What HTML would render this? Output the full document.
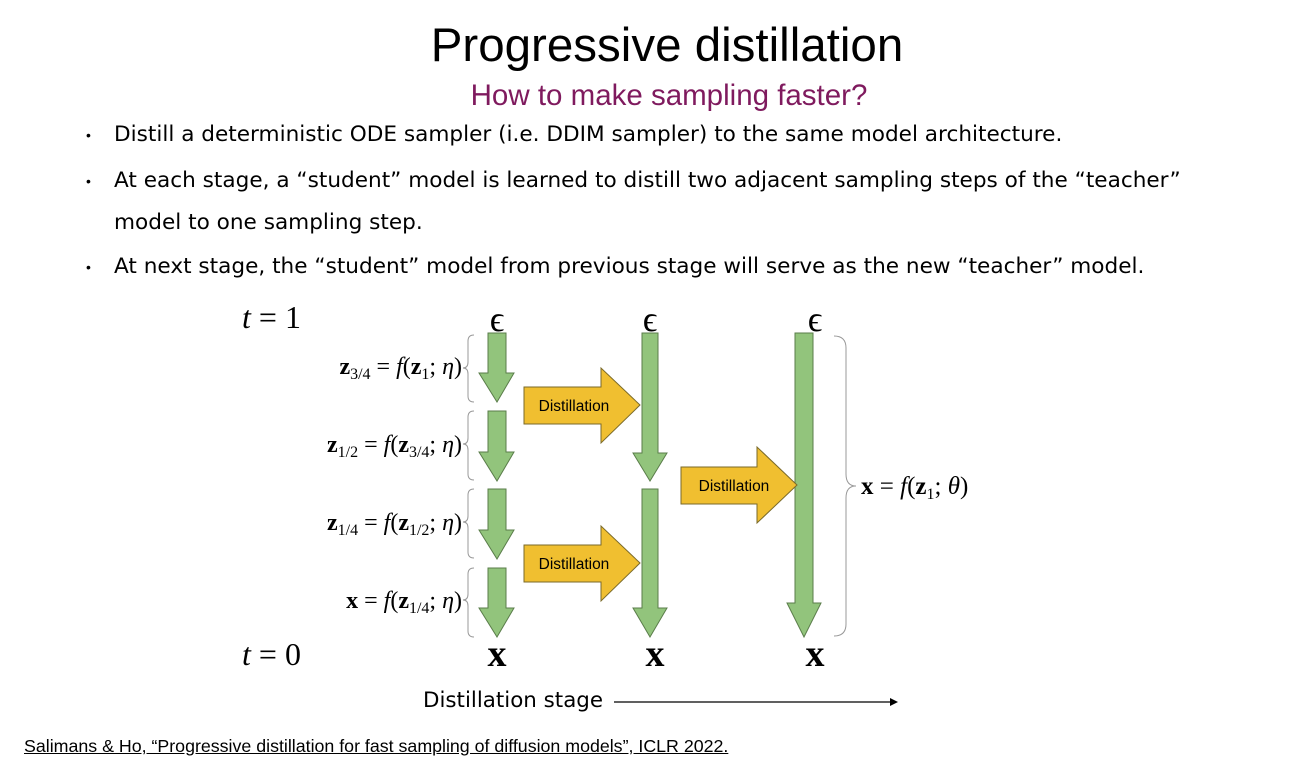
<!DOCTYPE html>
<html><head><meta charset="utf-8"><style>
body{margin:0;width:1307px;height:762px;background:#fff;position:relative;overflow:hidden;font-family:"Liberation Sans",sans-serif;color:#000}
.a{position:absolute;white-space:nowrap}
.t{left:0;width:1334px;text-align:center;top:18px;font-size:47.5px}
.s{left:0;width:1338px;text-align:center;top:79px;font-size:29.5px;color:#7f1a5e}
.b{left:114px;font-size:21.6px;font-family:"DejaVu Sans",sans-serif}
.d{left:86px;font-size:14px}
</style></head><body>
<div class="a t">Progressive distillation</div>
<div class="a s">How to make sampling faster?</div>
<div class="a d" style="top:127px">•</div>
<div class="a b" style="top:122px">Distill a deterministic ODE sampler (i.e. DDIM sampler) to the same model architecture.</div>
<div class="a d" style="top:173px">•</div>
<div class="a b" style="top:168px">At each stage, a “student” model is learned to distill two adjacent sampling steps of the “teacher”</div>
<div class="a b" style="top:210px">model to one sampling step.</div>
<div class="a d" style="top:259px">•</div>
<div class="a b" style="top:254px">At next stage, the “student” model from previous stage will serve as the new “teacher” model.</div>
<svg class="a" style="left:0;top:0" width="1307" height="762">
<g fill="#92c47c" stroke="#5a7d4a" stroke-width="1">
<path d="M488 333H506V373H514L497 402L479 373H488Z"/>
<path d="M488 411H506V452H514L497 481L479 452H488Z"/>
<path d="M488 489H506V530H514L497 559L479 530H488Z"/>
<path d="M488 568H506V608H514L497 637L479 608H488Z"/>
<path d="M642 333H658V453H667L650 481L633 453H642Z"/>
<path d="M642 489H658V608H667L650 637L633 608H642Z"/>
<path d="M795 333H813V603H821L804 637L787 603H795Z"/>
</g>
<g fill="#f0bf30" stroke="#7a6a2a" stroke-width="1">
<path d="M524 387H601V368L640 405L601 443V424H524Z"/>
<path d="M524 545H601V526L640 563L601 601V582H524Z"/>
<path d="M681 467H757V447L797 485L757 523V504H681Z"/>
</g>
<g font-size="15.5" text-anchor="middle" font-family="Liberation Sans">
<text x="574" y="411">Distillation</text>
<text x="574" y="569">Distillation</text>
<text x="734" y="491">Distillation</text>
</g>
<g fill="none" stroke="#999" stroke-width="1">
<path d="M474 335Q468 335 468 341V362Q468 368 463 368Q468 368 468 374V396Q468 402 474 402"/>
<path d="M474 411Q468 411 468 417V438Q468 444 463 444Q468 444 468 450V474Q468 480 474 480"/>
<path d="M474 489Q468 489 468 495V516Q468 522 463 522Q468 522 468 528V552Q468 558 474 558"/>
<path d="M474 568Q468 568 468 574V594Q468 600 463 600Q468 600 468 606V631Q468 637 474 637"/>
<path d="M834 336Q846 336 846 348V474Q846 486 856 486Q846 486 846 498V624Q846 636 834 636"/>
</g>
<g font-family="Liberation Serif" >
<text x="242" y="328" font-size="32" font-style="italic">t <tspan font-style="normal">= 1</tspan></text>
<text x="242" y="665" font-size="32" font-style="italic">t <tspan font-style="normal">= 0</tspan></text>
<text x="497" y="331" font-size="36" text-anchor="middle">ϵ</text>
<text x="650" y="331" font-size="36" text-anchor="middle">ϵ</text>
<text x="815" y="331" font-size="36" text-anchor="middle">ϵ</text>
<text x="497" y="666" font-size="38" font-weight="bold" text-anchor="middle">x</text>
<text x="655" y="666" font-size="38" font-weight="bold" text-anchor="middle">x</text>
<text x="815" y="666" font-size="38" font-weight="bold" text-anchor="middle">x</text>
<g font-size="24" text-anchor="end">
<text x="462" y="374"><tspan font-weight="bold">z</tspan><tspan font-size="16" dy="5">3/4</tspan><tspan dy="-5"> = </tspan><tspan font-style="italic">f</tspan>(<tspan font-weight="bold">z</tspan><tspan font-size="16" dy="5">1</tspan><tspan dy="-5">; </tspan><tspan font-style="italic">η</tspan>)</text>
<text x="462" y="452"><tspan font-weight="bold">z</tspan><tspan font-size="16" dy="5">1/2</tspan><tspan dy="-5"> = </tspan><tspan font-style="italic">f</tspan>(<tspan font-weight="bold">z</tspan><tspan font-size="16" dy="5">3/4</tspan><tspan dy="-5">; </tspan><tspan font-style="italic">η</tspan>)</text>
<text x="462" y="530"><tspan font-weight="bold">z</tspan><tspan font-size="16" dy="5">1/4</tspan><tspan dy="-5"> = </tspan><tspan font-style="italic">f</tspan>(<tspan font-weight="bold">z</tspan><tspan font-size="16" dy="5">1/2</tspan><tspan dy="-5">; </tspan><tspan font-style="italic">η</tspan>)</text>
<text x="462" y="608"><tspan font-weight="bold">x</tspan> = <tspan font-style="italic">f</tspan>(<tspan font-weight="bold">z</tspan><tspan font-size="16" dy="5">1/4</tspan><tspan dy="-5">; </tspan><tspan font-style="italic">η</tspan>)</text>
</g>
<text x="861" y="494" font-size="25"><tspan font-weight="bold">x</tspan> = <tspan font-style="italic">f</tspan>(<tspan font-weight="bold">z</tspan><tspan font-size="16" dy="5">1</tspan><tspan dy="-5">; </tspan><tspan font-style="italic">θ</tspan>)</text>
</g>
<line x1="614" y1="702" x2="890" y2="702" stroke="#000" stroke-width="1.3"/>
<path d="M890 698L898 702L890 706Z"/>
</svg>
<div class="a" style="left:423px;top:688px;font-size:21.4px;font-family:'DejaVu Sans',sans-serif">Distillation stage</div>
<div class="a" style="left:24px;top:736px;font-size:17.8px;text-decoration:underline">Salimans &amp; Ho, “Progressive distillation for fast sampling of diffusion models”, ICLR 2022.</div>
</body></html>
